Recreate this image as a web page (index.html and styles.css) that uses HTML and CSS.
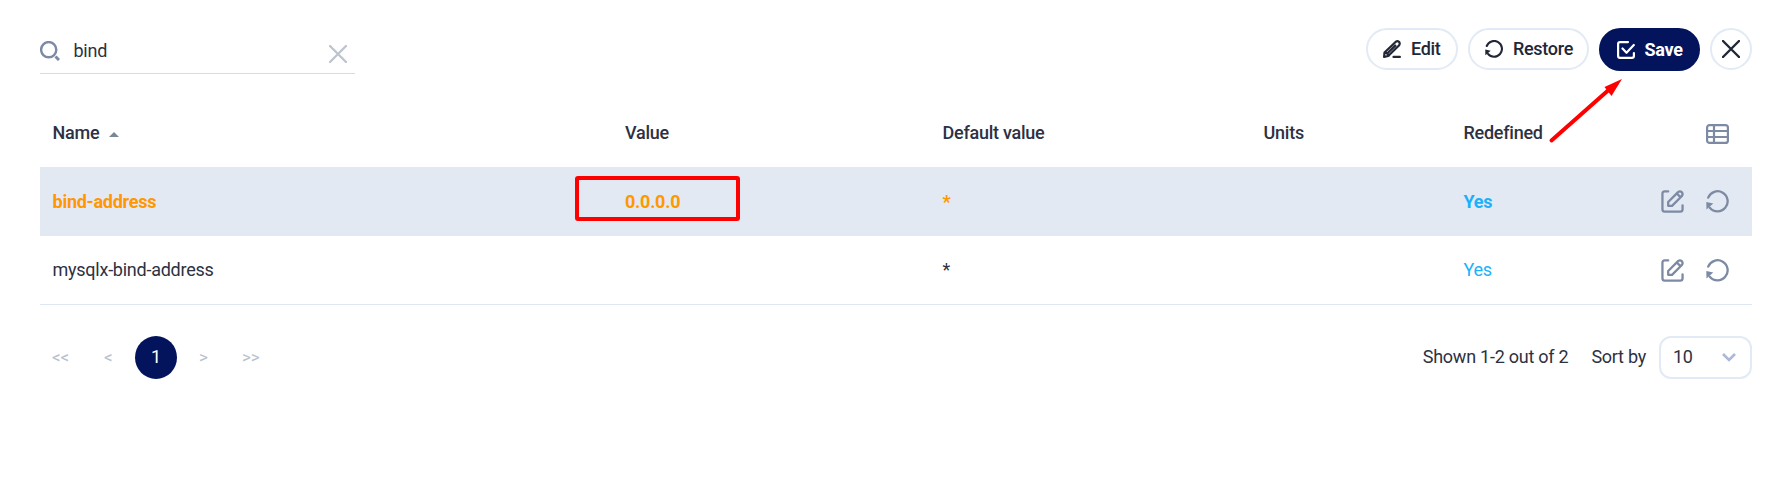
FILE: index.html
```
<!DOCTYPE html>
<html lang="en">
<head>
<meta charset="utf-8">
<title>Settings</title>
<link rel="stylesheet" href="styles.css">
</head>
<body>
<svg class="sprite" width="0" height="0">
  <symbol id="edit" viewBox="0 0 24 24">
    <path d="M7.5 1.5H4Q1.5 1.5 1.5 4V20Q1.5 22.500 4 22.500H20Q22.500 22.500 22.500 20V16M7.500 16.500V12.500L17.800 2.200Q19.800 .700 21.700 2.300Q23.300 4.200 21.800 6.200L11.500 16.500ZM16.500 3.700L20.300 7.500" fill="none" stroke="currentColor" stroke-width="2.400" stroke-linejoin="round" stroke-linecap="round"/>
  </symbol>
  <symbol id="restore" viewBox="0 0 24 24">
    <path class="restore-arc" d="M2.300 8A10.500 10.500 0 1 1 4 18.500" fill="none" stroke="currentColor" stroke-linecap="round"/>
    <path d="M.300 12.600L7.600 14.200L.500 20.400Z" fill="currentColor"/>
  </symbol>
</svg>
<main class="page">
  <header class="toolbar">
    <label class="search">
      <svg class="search-icon" viewBox="0 0 20 20"><circle cx="8.700" cy="8.700" r="7.600" fill="none" stroke="currentColor" stroke-width="2.400"/><path d="M15.500 15.500L19 19" stroke="currentColor" stroke-width="3"/></svg>
      <span class="query">bind</span>
      <svg class="clear" viewBox="0 0 18 18"><path d="M1 1L17 17M17 1L1 17" stroke="currentColor" stroke-width="2.300" stroke-linecap="round"/></svg>
    </label>
    <div class="actions">
      <button class="button button-edit"><svg class="button-icon" viewBox="0 0 18 18" fill="none" stroke="currentColor" stroke-width="2.200" stroke-linejoin="round" stroke-linecap="round"><path d="M1.100 16.900L1.500 12.500L12.800 1.700Q14.500 .700 16 1.800Q17.300 3.400 16.200 5.200L5.200 16ZM2.300 11.800L6 15.500M5.500 12.300L12.300 5.600M10.500 16.900H16.900"/></svg>Edit</button>
      <button class="button button-restore"><svg class="button-icon restore-icon"><use href="#restore"/></svg>Restore</button>
      <button class="button button-save"><svg class="button-icon" viewBox="0 0 18 18" fill="none" stroke="currentColor" stroke-width="2.200" stroke-linejoin="round" stroke-linecap="round"><path d="M11 1.100H3Q1.100 1.100 1.100 3V15Q1.100 16.900 3 16.900H15Q16.900 16.900 16.900 15V12M5.500 7.500L9.500 11.800L16.800 4"/></svg>Save</button>
      <button class="button button-close" aria-label="Close"><svg class="button-icon" viewBox="0 0 18 18"><path d="M1 1L17 17M17 1L1 17" stroke="currentColor" stroke-width="2.400" stroke-linecap="round"/></svg></button>
    </div>
  </header>

  <section class="table">
    <div class="row head">
      <span class="name">Name <i class="sort"></i></span><span>Value</span><span>Default value</span><span>Units</span><span>Redefined</span>
      <span class="tools"><svg class="columns" viewBox="0 0 23 20" fill="none" stroke="currentColor" stroke-width="2.200"><rect x="1.100" y="1.100" width="20.800" height="17.800" rx="2.500"/><path d="M1 7H22M1 13H22M8 1V19"/></svg></span>
    </div>
    <div class="row changed">
      <span>bind-address</span><span class="value">0.0.0.0<i class="highlight"></i></span><span>*</span><span></span><span class="yes">Yes</span>
      <span class="tools"><svg class="tool"><use href="#edit"/></svg><svg class="tool"><use href="#restore"/></svg></span>
    </div>
    <div class="row last">
      <span>mysqlx-bind-address</span><span></span><span>*</span><span></span><span class="yes">Yes</span>
      <span class="tools"><svg class="tool"><use href="#edit"/></svg><svg class="tool"><use href="#restore"/></svg></span>
    </div>
  </section>

  <footer class="footer">
    <nav class="pager"><span class="step first">&lt;&lt;</span><span class="step prev">&lt;</span><span class="current">1</span><span class="step next">&gt;</span><span class="step">&gt;&gt;</span></nav>
    <div class="paging">
      <span class="shown">Shown 1-2 out of 2</span><span class="sort-by">Sort by</span>
      <div class="select">10<svg class="chevron" viewBox="0 0 14 9"><path d="M1 1L7 7L13 1" fill="none" stroke="currentColor" stroke-width="2.600"/></svg></div>
    </div>
  </footer>
</main>
<svg class="arrow" viewBox="0 0 80 70"><path d="M6.500 61.500L63 11.500" stroke="currentColor" stroke-width="4" stroke-linecap="round"/><path d="M77 0L59.500 8L66.500 17Z" fill="currentColor"/></svg>
</body>
</html>
```
FILE: styles.css
```
* { box-sizing: border-box; }
body {
  margin: 0;
  background: #fff;
  color: #2d3142;
  font: 18px/24px Roboto, sans-serif;
  letter-spacing: -.25px;
}
.sprite, .arrow { position: absolute; }
.page { padding: 28px 33px 0 40px; }
.toolbar {
  display: flex;
  justify-content: space-between;
  align-items: flex-start;
  height: 71px;
}
.search {
  display: flex;
  align-items: center;
  width: 315px;
  height: 46px;
  padding-bottom: 8px;
  border-bottom: 1px solid #d2ddeb;
}
.search-icon { width: 20px; height: 20px; margin-top: 9px; color: #7d8aa6; }
.query { flex: 1; margin: 8px 0 0 13.500px; }
.clear { width: 18px; height: 18px; margin: 15px 8px 0 0; color: #bdc4ce; }
.actions { display: flex; gap: 10px; }
.button {
  display: flex;
  align-items: center;
  height: 42px;
  padding: 0 0 0 15px;
  border: 2px solid #e2eaf5;
  border-radius: 22px;
  background: #fff;
  color: #222737;
  font: 500 18px/24px Roboto, sans-serif;
  letter-spacing: -.3px;
}
.button-icon { flex: none; width: 18px; height: 18px; margin-right: 10px; }
.restore-icon { stroke-width: 2.800; }
.button-edit { width: 92px; }
.button-restore { width: 121px; }
.button-save {
  width: 101px;
  height: 43px;
  padding-left: 16px;
  border-color: #04145c;
  background: #04145c;
  color: #fff;
  font-weight: 700;
}
.button-save .button-icon { margin-right: 9.500px; }
.button-close { width: 42px; padding: 0; justify-content: center; }
.button-close .button-icon { margin: 0; }
.row {
  display: grid;
  grid-template-columns: 572.500px 317.500px 321px 200px 1fr auto;
  align-items: center;
  height: 69px;
  padding: 0 23px 0 12.500px;
}
.head { height: 68px; font-weight: 500; }
.name { display: flex; align-items: center; }
.sort {
  margin: 3px 0 0 10px;
  border: 5px solid transparent;
  border-top: 0;
  border-bottom-color: #7b8799;
}
.tools { display: flex; gap: 22px; color: #7d8aa3; }
.tool { width: 23px; height: 23px; stroke-width: 2.400; }
.columns { width: 23px; height: 20px; margin-top: 1px; }
.changed { background: #e2e9f3; color: #ff9800; font-weight: 700; }
.last { border-bottom: 1px solid #dfe7f2; }
.yes { color: #1bb1fa; }
.value { position: relative; }
.highlight {
  position: absolute;
  left: -50.500px;
  top: -14px;
  width: 165px;
  height: 45px;
  border: 4px solid #f00;
  border-radius: 3px;
}
.footer {
  display: flex;
  justify-content: space-between;
  align-items: center;
  height: 43px;
  margin-top: 31px;
}
.pager { display: flex; align-items: center; padding-left: 12px; font-size: 17px; }
.step { padding-bottom: 2px; color: #b8bfce; }
.first { width: 52px; }
.prev { width: 31px; }
.current {
  width: 42px;
  height: 43px;
  border-radius: 50%;
  background: #04145c;
  color: #fff;
  font-size: 18px;
  line-height: 42px;
  text-align: center;
}
.next { width: 43px; margin-left: 22px; }
.paging { display: flex; align-items: center; }
.shown { margin-right: 23px; }
.sort-by { margin-right: 13px; }
.shown, .sort-by { padding-bottom: 1px; }
.select {
  display: flex;
  align-items: center;
  justify-content: space-between;
  width: 93px;
  height: 43px;
  padding: 0 14px 1px 12px;
  border: 2px solid #e2eaf5;
  border-radius: 12px;
}
.chevron { width: 14px; height: 9px; margin-top: 1px; color: #abb9d6; }
.arrow { left: 1545px; top: 79px; width: 80px; height: 70px; color: #f00; }
```
